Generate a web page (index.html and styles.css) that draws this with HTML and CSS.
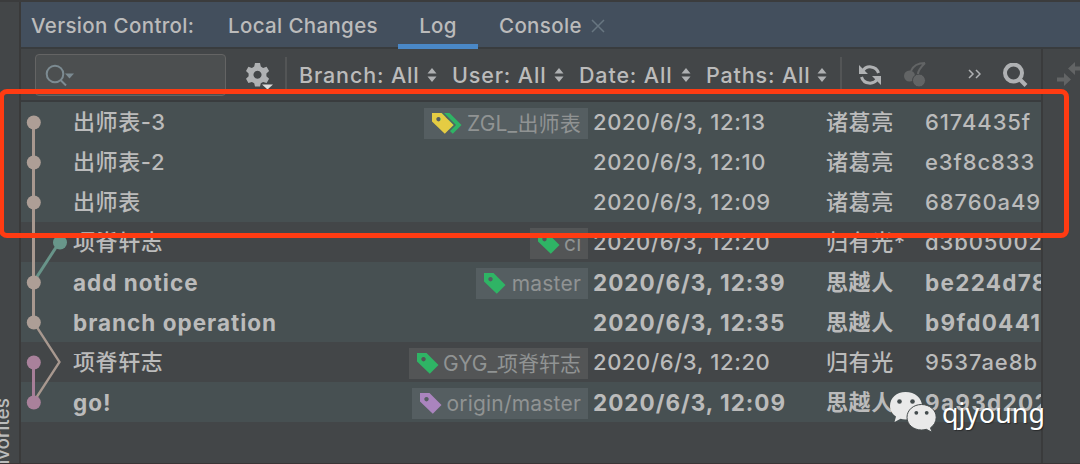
FILE: index.html
```
<!DOCTYPE html>
<html lang="zh">
<head>
  <meta charset="utf-8">
  <title>Version Control</title>
  <link rel="stylesheet" href="styles.css">
</head>
<body>
  <svg class="defs" width="0" height="0">
    <symbol id="tag" viewBox="0 0 22 22">
      <path fill-rule="evenodd" d="M0 0H9.5L21.5 12 12.800 20.700 0 8.500ZM6.500 4a2.200 2.200 0 1 0 .01 0Z"/>
    </symbol>
    <symbol id="sort" viewBox="0 0 10 14">
      <path d="M5 0 9.500 5.500H.5ZM5 14 9.500 8.500H.5Z"/>
    </symbol>
  </svg>

  <div class="window">
    <div class="sidebar"><span>Favorites</span></div>

    <div class="panel">
      <div class="tabs">
        <span class="title">Version Control:</span>
        <span class="tab local">Local Changes</span>
        <span class="tab log active">Log</span>
        <span class="tab console">Console</span>
        <svg class="close" width="14" height="14" viewBox="0 0 14 14"><path d="M1 1 13 13M13 1 1 13"/></svg>
      </div>

      <div class="main">
        <div class="content">
          <div class="toolbar">
            <div class="search">
              <svg width="30" height="24" viewBox="0 0 30 24">
                <circle cx="10" cy="10" r="8.300"/><path class="handle" d="M15.500 16 21 21.500"/>
                <path class="arrow" d="M20 9.500h9l-4.500 5z"/>
              </svg>
            </div>
            <svg class="gear" width="28" height="28" viewBox="0 0 28 28">
              <path fill-rule="evenodd" d="M9 1h5l.8 3.600 2.300 1.300 3.500-1.200 2.500 4.300-2.700 2.500v2.800l2.700 2.500-2.500 4.300-3.500-1.200-2.300 1.300L14 24.500H9l-.8-3.300-2.300-1.300-3.500 1.200L0 16.800l2.600-2.500v-2.800L0 9l2.400-4.300 3.500 1.200 2.300-1.300ZM11.500 8.800a4 4 0 1 0 .01 0Z"/>
              <path class="corner" d="M16 22.500h11l-5.500 5z"/>
            </svg>
            <div class="sep"></div>
            <div class="filter branch">Branch: All <svg><use href="#sort"/></svg></div>
            <div class="filter user">User: All <svg><use href="#sort"/></svg></div>
            <div class="filter date">Date: All <svg><use href="#sort"/></svg></div>
            <div class="filter paths">Paths: All <svg><use href="#sort"/></svg></div>
            <div class="sep"></div>
            <svg class="refresh" width="22" height="22" viewBox="0 0 22 22">
              <path class="arc" d="M3.500 7.500A8.700 8.700 0 0 1 19.500 9M18.500 14.500A8.700 8.700 0 0 1 2.500 13"/>
              <path d="M0 1V10H9ZM22 21V12H13Z"/>
            </svg>
            <svg class="cherry" width="22" height="25" viewBox="0 0 22 25">
              <circle cx="5.500" cy="14" r="5.500"/>
              <circle class="front" cx="15" cy="18.500" r="6.500"/>
              <path d="M7 9C9 4 13 1 21 1M14 12C14 8 17 5 21 1"/>
            </svg>
            <svg class="more" width="13" height="10" viewBox="0 0 13 10"><path d="M1 1 5 5 1 9M8 1 12 5 8 9"/></svg>
            <svg class="find" width="25" height="25" viewBox="0 0 25 25"><circle cx="10.500" cy="10" r="8.500"/><path d="M16.500 16 23 22.500"/></svg>
          </div>

          <div class="commits">
            <div class="row mine">
              <div class="subject">出师表-3</div>
              <div class="ref zgl"><svg class="yellow double" width="30" height="22"><use class="back" href="#tag" x="8" width="22" height="22"/><path class="gap" d="M10 0H12L24 12 14 22H11.500L22 12Z"/><use href="#tag" width="22" height="22"/></svg><span>ZGL_出师表</span></div>
              <div class="time">2020/6/3, 12:13</div><div class="author">诸葛亮</div><div class="hash">6174435f</div>
            </div>
            <div class="row mine">
              <div class="subject">出师表-2</div>
              <div class="time">2020/6/3, 12:10</div><div class="author">诸葛亮</div><div class="hash">e3f8c833</div>
            </div>
            <div class="row mine">
              <div class="subject">出师表</div>
              <div class="time">2020/6/3, 12:09</div><div class="author">诸葛亮</div><div class="hash">68760a49</div>
            </div>
            <div class="row">
              <div class="subject">项脊轩志</div>
              <div class="ref ci"><svg class="green" width="22" height="22"><use href="#tag"/></svg><span>ci</span></div>
              <div class="time">2020/6/3, 12:20</div><div class="author">归有光*</div><div class="hash">d3b05002</div>
            </div>
            <div class="row mine bold">
              <div class="subject">add notice</div>
              <div class="ref master"><svg class="green" width="22" height="22"><use href="#tag"/></svg><span>master</span></div>
              <div class="time">2020/6/3, 12:39</div><div class="author">思越人</div><div class="hash">be224d78</div>
            </div>
            <div class="row mine bold">
              <div class="subject">branch operation</div>
              <div class="time">2020/6/3, 12:35</div><div class="author">思越人</div><div class="hash">b9fd0441</div>
            </div>
            <div class="row">
              <div class="subject">项脊轩志</div>
              <div class="ref gyg"><svg class="green" width="22" height="22"><use href="#tag"/></svg><span>GYG_项脊轩志</span></div>
              <div class="time">2020/6/3, 12:20</div><div class="author">归有光</div><div class="hash">9537ae8b</div>
            </div>
            <div class="row mine bold">
              <div class="subject">go!</div>
              <div class="ref origin"><svg class="purple" width="22" height="22"><use href="#tag"/></svg><span>origin/master</span></div>
              <div class="time">2020/6/3, 12:09</div><div class="author">思越人</div><div class="hash">9a93d202</div>
            </div>

            <svg class="graph" width="50" height="320" viewBox="0 0 50 320">
              <path class="teal" d="M38.500 140 12.500 180"/>
              <path class="sand" d="M12.500 20V220"/>
              <path class="sand thin" d="M12.500 220 38.500 260 12.500 300"/>
              <path class="pink" d="M12.500 260V300"/>
              <g class="sand-dot">
                <circle cx="12.800" cy="20.500" r="7"/>
                <circle cx="12.800" cy="60.500" r="7"/>
                <circle cx="12.800" cy="100.500" r="7"/>
                <circle cx="12.800" cy="180.500" r="7"/>
                <circle cx="12.800" cy="220.500" r="7"/>
              </g>
              <circle class="teal-dot" cx="39" cy="140.500" r="7"/>
              <circle class="pink-dot" cx="12.800" cy="260.500" r="7"/>
              <circle class="pink-dot" cx="12.800" cy="300.500" r="7"/>
            </svg>
          </div>
        </div>

        <div class="details">
          <svg width="23" height="24" viewBox="0 0 23 24">
            <path d="M0 15.500H7V11L14 17.500 7 24V19.500H0ZM23 4.500H18V0L11 6.500 18 13V8.500H23Z"/>
          </svg>
        </div>
      </div>
    </div>

    <div class="highlight"></div>

    <div class="watermark">
      <svg width="48" height="42" viewBox="0 0 48 42">
        <path class="bubble" d="M16.500 1C7.500 1 1 7 1 14.800c0 4.500 2.300 8.300 6 10.800L5.500 31l6-3.200c1.600.5 3.300.7 5 .7C26 28.500 33 22.500 33 14.800S26 1 16.500 1Z"/>
        <path class="bubble front" d="M32.500 13.500C24.500 13.500 18 19 18 26.300S24.500 39 32.500 39c1.700 0 3.300-.2 4.800-.7l5.700 3-1.500-4.500c3.500-2.400 5.700-6.200 5.700-10.500C47.200 19 40.500 13.500 32.500 13.500Z"/>
        <g class="eyes"><circle cx="10.500" cy="10.500" r="2.300"/><circle cx="23.500" cy="10.500" r="2.300"/><circle cx="27.300" cy="21.800" r="1.900"/><circle cx="37.700" cy="21.800" r="1.900"/></g>
      </svg>
      <span>qjyoung</span>
    </div>
  </div>
</body>
</html>
```

FILE: styles.css
```
* {
  box-sizing: border-box;
}
body {
  margin: 0;
  background-color: #434648;
  color: #bbbbbb;
  font-family: Inter, "Noto Sans CJK SC", sans-serif;
  font-size: 22px;
  white-space: nowrap;
}
svg {
  display: block;
  flex: none;
}
.defs {
  position: absolute;
}
.window {
  position: relative;
  display: flex;
  width: 1080px;
  height: 464px;
  overflow: hidden;
  border-top: 2px solid #3b3c3d;
  border-bottom: 1px solid #3b3536;
}
.sidebar {
  width: 21px;
  flex: none;
  border-right: 2px solid #3a3a3a;
  display: flex;
  align-items: flex-end;
  overflow: hidden;
}
.sidebar span {
  writing-mode: vertical-rl;
  transform: rotate(180deg);
  font-size: 19px;
  font-weight: 500;
  line-height: 24px;
  margin-left: -9px;
  margin-bottom: -18px;
}
.panel {
  flex: 1;
  min-width: 0;
  display: flex;
  flex-direction: column;
}
.tabs {
  display: flex;
  height: 47px;
  flex: none;
  background-color: #434f5d;
  border-bottom: 2px solid #393c3e;
  font-size: 20.5px;
  font-weight: 500;
  line-height: 47px;
  letter-spacing: 0.35px;
}
.title {
  width: 197px;
  padding-left: 10px;
}
.tab {
  height: 47px;
}
.local {
  width: 180px;
  padding-left: 10px;
}
.log {
  width: 80px;
  text-align: center;
}
.active {
  border-bottom: 5px solid #4a88c7;
}
.console {
  width: 112px;
  padding-left: 21px;
}
.close {
  margin: 17px 0 0 1px;
  fill: none;
  stroke: #687681;
  stroke-width: 1.5;
}
.main {
  display: flex;
  flex: 1;
}
.content {
  width: 1022px;
  flex: none;
  border-right: 2px solid #3a3b3c;
}
.toolbar {
  display: flex;
  height: 53px;
  border-bottom: 2px solid #393c3e;
  line-height: 53px;
}
.search {
  width: 191px;
  height: 42px;
  margin: 5px 20px 0 14px;
  border: 1.5px solid #646464;
  border-radius: 4px;
  background-color: #4c4f50;
  padding: 9px;
}
.search circle,
.search .handle {
  fill: none;
  stroke: #7c8b92;
  stroke-width: 2;
}
.search .arrow {
  fill: #7c8b92;
}
.gear {
  margin: 13px 11px 0 0;
  fill: #afb1b3;
}
.gear .corner {
  fill: #dddddd;
}
.sep {
  width: 2px;
  height: 37px;
  margin-top: 8px;
  background-color: #535556;
}
.filter {
  display: flex;
  font-weight: 500;
  font-size: 21.5px;
  letter-spacing: 0.85px;
}
.filter svg {
  width: 10px;
  height: 14px;
  margin: 19px 0 0 auto;
  fill: #afb1b3;
}
.branch {
  width: 138px;
  margin-left: 12px;
}
.user {
  width: 112px;
  margin-left: 15px;
}
.date {
  width: 112px;
  margin-left: 15px;
}
.paths {
  width: 121px;
  margin: 0 13px 0 15px;
}
.refresh {
  margin: 15px 23px 0 17px;
  fill: #afb1b3;
}
.refresh .arc {
  fill: none;
  stroke: #afb1b3;
  stroke-width: 3;
}
.cherry {
  margin: 13px 42px 0 0;
  fill: #626465;
}
.cherry path {
  fill: none;
  stroke: #626465;
  stroke-width: 2;
}
.cherry .front {
  stroke: #434648;
  stroke-width: 1;
}
.more {
  margin: 20px 22px 0 0;
  fill: none;
  stroke: #afb1b3;
  stroke-width: 1.5;
}
.find {
  margin-top: 14px;
  fill: none;
  stroke: #afb1b3;
  stroke-width: 4;
}
.commits {
  position: relative;
}
.row {
  display: flex;
  height: 40px;
  background-color: var(--row);
  font-weight: 500;
  letter-spacing: 0.6px;
  line-height: 41px;
  overflow: hidden;
  --row: #434648;
  --label: #535556;
}
.row > div {
  flex: none;
}
.mine {
  --row: #475052;
  --label: #555e61;
}
.bold {
  font-size: 22.5px;
  font-weight: bold;
  letter-spacing: 1px;
}
.row .subject {
  flex: 1;
  padding-left: 52px;
}
.ref {
  display: flex;
  height: 31px;
  margin-top: 6px;
  padding: 0 7px 0 8px;
  background-color: var(--label);
  color: #909393;
  font-size: 21px;
  font-weight: normal;
  line-height: 31px;
  letter-spacing: 0.2px;
}
.ref svg {
  margin: 5px 4px 0 0;
}
.ref span {
  margin-left: auto;
}
.zgl {
  width: 164px;
}
.ci {
  width: 58px;
}
.master {
  width: 112px;
}
.gyg {
  width: 179px;
  letter-spacing: 0;
}
.origin {
  width: 176px;
}
.green,
.back {
  fill: #2fb465;
}
.yellow {
  fill: #e5cc43;
}
.purple {
  fill: #aa84be;
}
.gap {
  fill: var(--label);
}
.time {
  width: 233px;
  margin-left: 5px;
}
.author {
  width: 99px;
}
.bold .author {
  font-size: 22px;
  letter-spacing: 0.6px;
}
.hash {
  width: 116px;
  overflow: hidden;
  letter-spacing: 0.9px;
}
.bold .hash {
  letter-spacing: 1.3px;
}
.graph {
  position: absolute;
  left: 0;
  top: 0;
  fill: none;
  stroke-width: 3;
}
.sand {
  stroke: #a8988f;
}
.thin {
  stroke-width: 2.3;
}
.teal {
  stroke: #689489;
}
.pink {
  stroke: #a67e98;
}
.sand-dot {
  fill: #ad9e96;
}
.teal-dot {
  fill: #68968a;
}
.pink-dot {
  fill: #a9819b;
}
.details svg {
  margin: 13px 0 0 14px;
  fill: #626465;
}
.highlight {
  position: absolute;
  left: -1px;
  top: 87px;
  width: 1070px;
  height: 149px;
  border: 5px solid #ff3b12;
  border-radius: 8px;
}
.watermark {
  position: absolute;
  left: 889px;
  top: 389px;
  display: flex;
  color: #ffffff;
  font-family: "Noto Sans", sans-serif;
  font-size: 26.8px;
  line-height: 44px;
}
.watermark span {
  margin-left: 5px;
  text-shadow: 1px 1px 1px rgba(0, 0, 0, 0.4);
}
.bubble {
  fill: #e9e9e9;
}
.watermark .front {
  stroke: #454b4c;
  stroke-width: 1;
}
.eyes {
  fill: #424a4c;
}
```
